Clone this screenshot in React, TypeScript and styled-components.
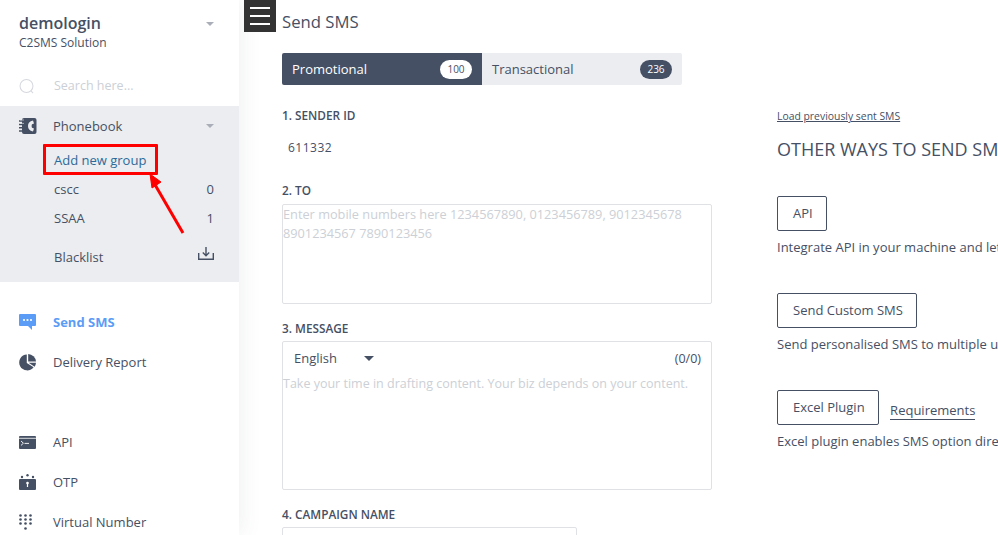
import React from "react";
import styled, { createGlobalStyle } from "styled-components";

const GlobalStyle = createGlobalStyle`
  html, body {
    margin: 0;
    padding: 0;
    height: 535px;
    overflow: hidden;
    background: #fff;
    font-family: "Open Sans", "Liberation Sans", sans-serif;
    color: #465064;
  }
`;

const Page = styled.div`
  position: relative;
  display: flex;
  width: 998px;
  height: 535px;
  overflow: hidden;
`;

const Sidebar = styled.aside`
  width: 239px;
  height: 535px;
  flex-shrink: 0;
  background: #fff;
  box-shadow: 0 0 22px rgba(70, 80, 100, 0.1);
  display: flex;
  flex-direction: column;
  overflow: hidden;
  position: relative;
`;

const Account = styled.div`
  height: 69px;
  flex-shrink: 0;
  padding: 12px 25px 0 19px;
  box-sizing: border-box;
  display: flex;
  justify-content: space-between;
`;

const AccountName = styled.div`
  font-size: 16px;
  line-height: 22px;
  font-weight: 600;
`;

const AccountSub = styled.div`
  font-size: 12px;
  line-height: 16px;
  margin-top: 1px;
`;

const Caret = styled.span<{ $dark?: boolean; $top?: number }>`
  display: block;
  width: 0;
  height: 0;
  margin-top: ${(p) => p.$top ?? 0}px;
  border-left: ${(p) => (p.$dark ? 5 : 4)}px solid transparent;
  border-right: ${(p) => (p.$dark ? 5 : 4)}px solid transparent;
  border-top: ${(p) => (p.$dark ? 5 : 4)}px solid ${(p) => (p.$dark ? "#465064" : "#a9aeb8")};
`;

const Search = styled.div`
  height: 37px;
  flex-shrink: 0;
  box-sizing: border-box;
  padding: 0 0 4px 19px;
  display: flex;
  align-items: center;
  gap: 20px;
  font-size: 12.5px;
  color: #ccd0d6;
`;

const PhonebookGroup = styled.div`
  height: 176px;
  flex-shrink: 0;
  background: #ebedf0;
  display: flex;
  flex-direction: column;
`;

const NavRow = styled.div<{ $active?: boolean }>`
  height: 40px;
  padding: 0 25px 0 19px;
  display: flex;
  align-items: center;
  font-size: 13px;
  font-weight: ${(p) => (p.$active ? 700 : 400)};
  color: ${(p) => (p.$active ? "#5b9cf6" : "#465064")};
  flex-shrink: 0;
`;

const IconSlot = styled.span`
  width: 34px;
  flex-shrink: 0;
  display: flex;
  align-items: center;
`;

const NavLabel = styled.span`
  flex: 1;
`;

const SubRow = styled.div<{ $height: number; $link?: boolean }>`
  height: ${(p) => p.$height}px;
  box-sizing: border-box;
  padding: 0 25px 2px 54px;
  display: flex;
  align-items: center;
  justify-content: space-between;
  font-size: 13px;
  color: ${(p) => (p.$link ? "#2d6a99" : "#465064")};
`;

const NavGap = styled.div<{ $height: number }>`
  height: ${(p) => p.$height}px;
  flex-shrink: 0;
`;

const Hamburger = styled.div`
  position: absolute;
  left: 244px;
  top: 0;
  width: 32px;
  height: 32px;
  background: #333;
  display: flex;
  flex-direction: column;
  justify-content: center;
  align-items: center;
  gap: 6px;
  span {
    display: block;
    width: 20px;
    height: 2px;
    background: #fff;
  }
`;

const Main = styled.main`
  flex: 1;
  display: flex;
  padding-left: 43px;
  min-width: 0;
`;

const FormColumn = styled.section`
  width: 430px;
  flex-shrink: 0;
`;

const Title = styled.h1`
  margin: 10px 0 0;
  font-size: 16.7px;
  line-height: 23px;
  font-weight: 400;
`;

const Tabs = styled.div`
  display: flex;
  width: 400px;
  height: 32px;
  margin-top: 20px;
  border-radius: 2px;
  overflow: hidden;
`;

const Tab = styled.div<{ $active?: boolean }>`
  width: 200px;
  padding: 0 10px;
  box-sizing: border-box;
  display: flex;
  align-items: center;
  justify-content: space-between;
  font-size: 13px;
  background: ${(p) => (p.$active ? "#465064" : "#ebedf0")};
  color: ${(p) => (p.$active ? "#fff" : "#465064")};
`;

const Count = styled.span<{ $light?: boolean }>`
  width: 32px;
  height: 19px;
  border-radius: 10px;
  display: flex;
  align-items: center;
  justify-content: center;
  font-size: 10px;
  background: ${(p) => (p.$light ? "#fff" : "#465064")};
  color: ${(p) => (p.$light ? "#465064" : "#fff")};
`;

const FieldLabel = styled.div<{ $top: number }>`
  margin-top: ${(p) => p.$top}px;
  padding-bottom: 2px;
  font-size: 11.8px;
  line-height: 14px;
  font-weight: 600;
`;

const SenderValue = styled.div`
  margin-top: 15px;
  padding-left: 6px;
  font-size: 12px;
  line-height: 17px;
  letter-spacing: 0.5px;
`;

const Box = styled.div<{ $height: number; $width?: number; $top: number }>`
  box-sizing: border-box;
  width: ${(p) => p.$width ?? 430}px;
  height: ${(p) => p.$height}px;
  margin-top: ${(p) => p.$top}px;
  border: 1px solid #dfe1e5;
  border-radius: 2px;
  background: #fff;
`;

const Placeholder = styled.div<{ $size: number }>`
  font-size: ${(p) => p.$size}px;
  line-height: 19px;
  color: #ccd0d6;
`;

const MessageBar = styled.div`
  height: 32px;
  padding: 0 10px 0 11px;
  display: flex;
  align-items: center;
  justify-content: space-between;
  font-size: 13px;
`;

const Language = styled.div`
  display: flex;
  align-items: center;
  gap: 27px;
`;

const Counter = styled.span`
  font-size: 12.5px;
`;

const SideColumn = styled.section`
  margin-left: 65px;
  white-space: nowrap;
`;

const LoadLink = styled.a`
  display: block;
  margin-top: 110px;
  font-size: 10.4px;
  line-height: 13px;
  text-decoration: underline;
`;

const SideHeading = styled.h2`
  margin: 15px 0 0;
  font-size: 18px;
  line-height: 23px;
  font-weight: 400;
`;

const WayRow = styled.div<{ $top: number }>`
  margin-top: ${(p) => p.$top}px;
  display: flex;
  align-items: center;
  gap: 11px;
`;

const WayButton = styled.div`
  box-sizing: border-box;
  height: 35px;
  padding: 0 13.5px 2px 15px;
  border: 1px solid #465064;
  border-radius: 2px;
  display: flex;
  align-items: center;
  font-size: 13px;
`;

const Requirements = styled.a`
  font-size: 13px;
  line-height: 17px;
  margin-top: 6px;
  border-bottom: 1px solid #465064;
`;

const WayText = styled.p`
  margin: 8px 0 0;
  font-size: 13px;
  line-height: 17px;
`;

const DownloadMark = styled.svg`
  margin-bottom: 6px;
`;

const Highlight = styled.div`
  position: absolute;
  left: 43px;
  top: 144px;
  width: 115px;
  height: 31px;
  box-sizing: border-box;
  border: 3px solid #ff0000;
  border-radius: 1px;
  pointer-events: none;
`;

const ArrowMark = styled.svg`
  position: absolute;
  left: 145px;
  top: 170px;
`;

const SearchIcon = () => (
  <svg width="15" height="16" viewBox="0 0 16 17" fill="none" stroke="#d5d8de" strokeWidth="1.1">
    <circle cx="8" cy="8.5" r="6.9" />
    <path d="M12.5 13.5 15 16" />
  </svg>
);

const PhonebookIcon = () => (
  <svg width="18" height="16" viewBox="0 0 18 16">
    <rect x="3" y="0" width="14.5" height="16" rx="2" fill="#465064" />
    <path d="M0 3h4M0 6.4h4M0 9.8h4M0 13h4" stroke="#465064" strokeWidth="1.5" />
    <path d="M1 2h4M1 5.4h4" stroke="#ebedf0" strokeWidth="0.6" />
    <path d="M14 2.500c-3.500.6-5 2.800-5 5.500s1.500 4.900 5 5.500l1-3-2-.7c-.5-1-.5-2.600 0-3.600l2-.7z" fill="#ebedf0" />
  </svg>
);

const ChatIcon = () => (
  <svg width="17" height="17" viewBox="0 0 17 17">
    <path d="M1 0h15a1 1 0 0 1 1 1v10a1 1 0 0 1-1 1h-3v4l-4-4H1a1 1 0 0 1-1-1V1a1 1 0 0 1 1-1z" fill="#5b9cf6" />
    <circle cx="5" cy="6" r="1.1" fill="#fff" />
    <circle cx="8.5" cy="6" r="1.1" fill="#fff" />
    <circle cx="12" cy="6" r="1.1" fill="#fff" />
  </svg>
);

const PieIcon = () => (
  <svg width="17" height="17" viewBox="0 0 17 17">
    <path d="M7.800 .4A8 8 0 1 0 14.600 13.200L7.800 9z" fill="#465064" />
    <path d="M9.200 0A8.200 8.200 0 0 1 17 7.400H9.200z" fill="#465064" />
    <path d="M9.600 8.800H17a8.300 8.300 0 0 1-1.400 3.900z" fill="#465064" />
  </svg>
);

const ApiIcon = () => (
  <svg width="17" height="13" viewBox="0 0 17 13">
    <rect width="17" height="13" rx="1" fill="#465064" />
    <path d="M0 2.300h17" stroke="#fff" strokeWidth="0.8" />
    <path d="M2 5l2.400 2.200L2 9.400" stroke="#fff" strokeWidth="0.9" fill="none" />
    <path d="M5.500 7.400h4.500" stroke="#fff" strokeWidth="0.9" />
  </svg>
);

const OtpIcon = () => (
  <svg width="17" height="16" viewBox="0 0 17 16">
    <rect y="5" width="17" height="11" rx="1" fill="#465064" />
    <circle cx="3" cy="3" r="1.200" fill="#465064" />
    <circle cx="8.500" cy="1.200" r="1.200" fill="#465064" />
    <circle cx="14" cy="3" r="1.200" fill="#465064" />
    <circle cx="8.500" cy="9" r="1.300" fill="#fff" />
    <rect x="7.900" y="9" width="1.200" height="4" fill="#fff" />
  </svg>
);

const DialpadIcon = () => (
  <svg width="14" height="17" viewBox="0 0 14 17" fill="#465064">
    {[1.5, 5.5, 9.5].map((y) =>
      [1.5, 6.5, 11.5].map((x) => <circle key={`${x}-${y}`} cx={x} cy={y} r="1.300" />)
    )}
    <circle cx="6.500" cy="14.500" r="1.300" />
  </svg>
);

const DownloadIcon = () => (
  <DownloadMark width="16" height="13" viewBox="0 0 16 13" fill="none" stroke="#465064" strokeWidth="1.400">
    <path d="M.7 6v6.300h14.600V6" />
    <path d="M8 0v8.500M4.800 5.500 8 8.700l3.200-3.200" />
  </DownloadMark>
);

const App = () => {
  return (
    <>
      <GlobalStyle />
      <Page>
        <Sidebar>
          <Account>
            <div>
              <AccountName>demologin</AccountName>
              <AccountSub>C2SMS Solution</AccountSub>
            </div>
            <Caret $top={10} />
          </Account>
          <Search>
            <SearchIcon />
            <span>Search here...</span>
          </Search>
          <PhonebookGroup>
            <NavRow>
              <IconSlot><PhonebookIcon /></IconSlot>
              <NavLabel>Phonebook</NavLabel>
              <Caret />
            </NavRow>
            <SubRow $height={29} $link>Add new group</SubRow>
            <SubRow $height={29}>cscc<span>0</span></SubRow>
            <SubRow $height={29}>SSAA<span>1</span></SubRow>
            <SubRow $height={49}>Blacklist<DownloadIcon /></SubRow>
          </PhonebookGroup>
          <NavGap $height={20} />
          <NavRow $active>
            <IconSlot><ChatIcon /></IconSlot>
            <NavLabel>Send SMS</NavLabel>
          </NavRow>
          <NavRow>
            <IconSlot><PieIcon /></IconSlot>
            <NavLabel>Delivery Report</NavLabel>
          </NavRow>
          <NavGap $height={40} />
          <NavRow>
            <IconSlot><ApiIcon /></IconSlot>
            <NavLabel>API</NavLabel>
          </NavRow>
          <NavRow>
            <IconSlot><OtpIcon /></IconSlot>
            <NavLabel>OTP</NavLabel>
          </NavRow>
          <NavRow>
            <IconSlot><DialpadIcon /></IconSlot>
            <NavLabel>Virtual Number</NavLabel>
          </NavRow>
        </Sidebar>

        <Main>
          <FormColumn>
            <Title>Send SMS</Title>
            <Tabs>
              <Tab $active>Promotional<Count $light>100</Count></Tab>
              <Tab>Transactional<Count>236</Count></Tab>
            </Tabs>
            <FieldLabel $top={23}>1. SENDER ID</FieldLabel>
            <SenderValue>611332</SenderValue>
            <FieldLabel $top={27}>2. TO</FieldLabel>
            <Box $height={100} $top={5}>
              <Placeholder $size={12.75}>
                Enter mobile numbers here 1234567890, 0123456789, 9012345678
                <br />
                8901234567 7890123456
              </Placeholder>
            </Box>
            <FieldLabel $top={17}>3. MESSAGE</FieldLabel>
            <Box $height={149} $top={4}>
              <MessageBar>
                <Language>English<Caret $dark /></Language>
                <Counter>(0/0)</Counter>
              </MessageBar>
              <Placeholder $size={12.5}>Take your time in drafting content. Your biz depends on your content.</Placeholder>
            </Box>
            <FieldLabel $top={17}>4. CAMPAIGN NAME</FieldLabel>
            <Box $height={40} $width={295} $top={4} />
          </FormColumn>

          <SideColumn>
            <LoadLink>Load previously sent SMS</LoadLink>
            <SideHeading>OTHER WAYS TO SEND SMS</SideHeading>
            <WayRow $top={35}><WayButton>API</WayButton></WayRow>
            <WayText>Integrate API in your machine and let your software send SMS</WayText>
            <WayRow $top={37}><WayButton>Send Custom SMS</WayButton></WayRow>
            <WayText>Send personalised SMS to multiple users from a file</WayText>
            <WayRow $top={37}>
              <WayButton>Excel Plugin</WayButton>
              <Requirements>Requirements</Requirements>
            </WayRow>
            <WayText>Excel plugin enables SMS option directly from your sheet</WayText>
          </SideColumn>
        </Main>

        <Hamburger><span /><span /><span /></Hamburger>
        <Highlight />
        <ArrowMark width="42" height="66" viewBox="0 0 42 66">
          <path d="M38 63 9 13" stroke="#ff0000" strokeWidth="3" fill="none" />
          <path d="M5 4 16 12 7 18z" fill="#ff0000" stroke="#ff0000" strokeWidth="1" />
        </ArrowMark>
      </Page>
    </>
  );
};

export default App;
